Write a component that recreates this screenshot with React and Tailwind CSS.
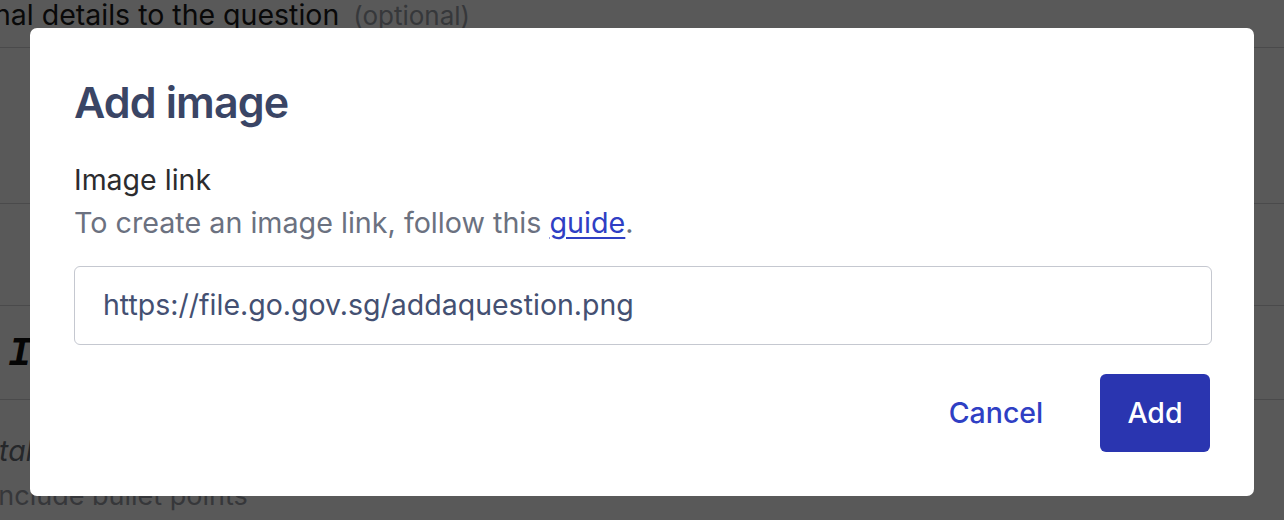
import React from "react";

function BackgroundPage() {
  return (
    <div className="w-full">
      <div className="h-[48px] border-b border-[#d4d4d8] flex items-start">
        <p className="mt-[-1px] ml-[-6px] text-[28.5px] leading-8 text-[#1a1a1a] whitespace-nowrap">
          nal details to the question
          <span className="ml-[14px] text-[26px] text-[#9ca0a8]">(optional)</span>
        </p>
      </div>
      <div className="h-[156px] border-b border-[#d4d4d8]" />
      <div className="h-[102px] border-b border-[#d4d4d8]" />
      <div className="h-[94px] border-b border-[#d4d4d8] flex items-center pl-[8px]">
        <span className="mt-[4px] font-['Liberation_Mono',monospace] text-[40px] font-bold italic leading-none text-[#111]">
          I
        </span>
      </div>
      <p className="mt-[35px] ml-[-9px] text-[28.5px] italic leading-8 text-[#6b6f78] whitespace-nowrap">
        Italic
      </p>
      <p className="mt-[13px] ml-[-9px] text-[27px] leading-8 text-[#9a9ea6] whitespace-nowrap">
        Include bullet points
      </p>
    </div>
  );
}

function AddImageModal() {
  return (
    <div className="absolute left-[30px] top-[28px] w-[1224px] h-[468px] bg-white rounded-[7px] px-[44px] pt-[50px] pb-[44px] flex flex-col">
      <h2 className="text-[43px] leading-[48px] font-semibold tracking-[-0.02em] text-[#3a4565]">
        Add image
      </h2>
      <label className="mt-[38px] text-[28.5px] leading-8 text-[#2c2c2e]">
        Image link
      </label>
      <p className="mt-[11px] text-[28.7px] leading-8 text-[#6b7180]">
        To create an image link, follow this{" "}
        <a href="#" className="text-[#2f3fc4] underline underline-offset-[4px]">
          guide
        </a>
        .
      </p>
      <div className="mt-[27px] h-[79px] w-[1138px] border border-[#c5c8d0] rounded-[6px] flex items-center pl-[28px]">
        <span className="text-[28.5px] text-[#445072]">
          https://file.go.gov.sg/addaquestion.png
        </span>
      </div>
      <div className="mt-auto flex justify-end items-center gap-[31px]">
        <button className="h-[78px] w-[146px] rounded-[6px] text-[28.5px] font-medium text-[#2f3fc4]">
          Cancel
        </button>
        <button className="h-[78px] w-[110px] rounded-[6px] bg-[#2a35b0] text-[28.5px] font-medium text-white">
          Add
        </button>
      </div>
    </div>
  );
}

export default function App() {
  return (
    <div className="relative w-full h-[520px] overflow-hidden bg-white font-['Inter',sans-serif]">
      <BackgroundPage />
      <div className="absolute inset-0 bg-black/65" />
      <AddImageModal />
    </div>
  );
}
